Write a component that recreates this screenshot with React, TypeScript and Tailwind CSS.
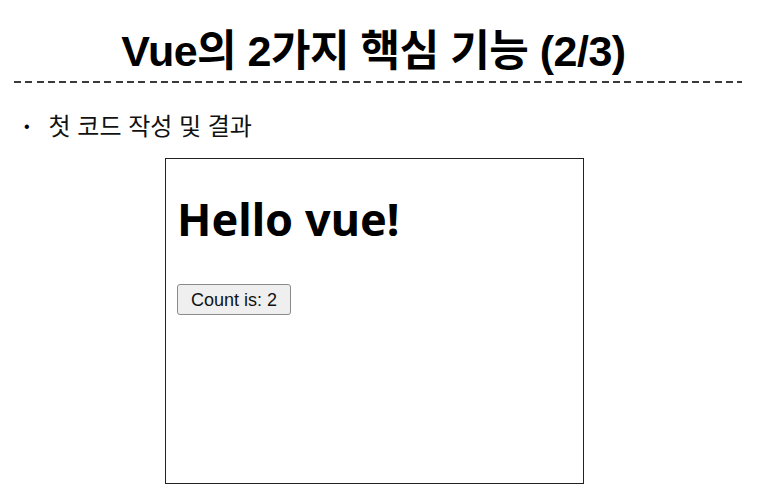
export default function App() {
  return (
    <div className="min-h-[499px] w-full bg-white font-['Liberation_Sans','Noto_Sans_CJK_KR',sans-serif] text-black">
      {/* Slide header */}
      <div className="px-[14px] pt-[25px]">
        <h1 className="pr-[22px] text-center text-[43px] font-bold leading-[52px] tracking-[-0.5px]">
          Vue의 2가지 핵심 기능 (2/3)
        </h1>
        <div className="mt-[4px] h-[2px] w-[728px] bg-[repeating-linear-gradient(90deg,#3a3a3a_0_7px,transparent_7px_11.3px)]" />
      </div>

      {/* Bullet */}
      <div className="mt-[29px] flex items-center gap-[19px] pl-[24px]">
        <span className="text-[16px] leading-none">•</span>
        <span className="text-[24px] leading-[30px] text-[#111]">첫 코드 작성 및 결과</span>
      </div>

      {/* Result preview */}
      <div className="ml-[165px] mt-[16px] h-[326px] w-[419px] border border-[#222] px-[11px]">
        <h2 className="mt-[32px] font-['Noto_Sans',sans-serif] text-[45px] font-bold leading-[56px]">
          Hello vue!
        </h2>
        <button className="mt-[37px] h-[31px] rounded-[3px] border border-[#8a8a8a] bg-[#efefef] px-[13px] font-['Liberation_Sans',sans-serif] text-[18px] leading-none text-[#111]">
          Count is: 2
        </button>
      </div>
    </div>
  );
}
